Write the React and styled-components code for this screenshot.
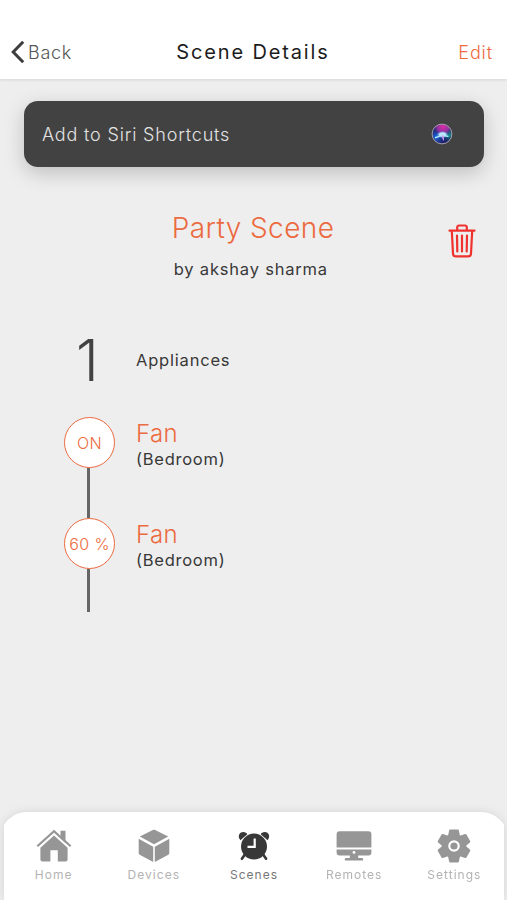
import styled, { createGlobalStyle } from "styled-components";

const COLORS = {
  accent: "#ec6a40",
  danger: "#f0322f",
  dark: "#424242",
  text: "#383838",
  background: "#eeeeee",
  muted: "#969696",
};

const GlobalStyle = createGlobalStyle`
  * {
    box-sizing: border-box;
  }
  body {
    margin: 0;
    background: ${COLORS.background};
    font-family: Inter, "Liberation Sans", sans-serif;
  }
`;

const steps = [
  { id: 1, value: "ON", name: "Fan", room: "(Bedroom)" },
  { id: 2, value: "60 %", name: "Fan", room: "(Bedroom)" },
];

const HomeIcon = () => (
  <svg width="36" height="34" viewBox="0 0 36 34" fill="currentColor">
    <path d="M24.5 1.7h5v12.2l-5-4.5z" />
    <path
      d="M1.3 17.2 18 2.2l16.7 15"
      fill="none"
      stroke="currentColor"
      strokeWidth="2.2"
    />
    <path d="M4.4 18.8 18 6.6l13.6 12.2v11.6a2 2 0 0 1-2 2h-7.8V21.2h-7.4v11.2H6.4a2 2 0 0 1-2-2z" />
  </svg>
);

const CubeIcon = () => (
  <svg width="36" height="34" viewBox="0 0 36 34" fill="currentColor">
    <path d="M3.8 7.6 17.4.8q.6-.3 1.2 0l13.6 6.8L18 15.3z" />
    <path d="M2.7 9.8 17.2 17.7v15.2L3.7 25.8q-1-.6-1-1.7z" />
    <path d="M33.3 9.8 18.8 17.7v15.2l13.5-7.1q1-.6 1-1.7z" />
  </svg>
);

const ClockIcon = () => (
  <svg width="36" height="34" viewBox="0 0 36 34" fill="currentColor">
    <path d="M4.4 11.2C1.3 8 3 3.1 7.3 3.1c2 0 3.5 1 4 2.2zM31.6 11.2c3.1-3.2 1.4-8.1-2.9-8.1-2 0-3.5 1-4 2.2z" />
    <circle cx="18" cy="17.6" r="13" />
    <path
      d="m8.5 26-2.6 3.8M27.5 26l2.6 3.8"
      stroke="currentColor"
      strokeWidth="2.6"
      strokeLinecap="round"
    />
    <path
      d="M18.7 9.4v8.4h-7.2"
      fill="none"
      stroke="#fff"
      strokeWidth="2.2"
    />
  </svg>
);

const MonitorIcon = () => (
  <svg width="36" height="34" viewBox="0 0 36 34" fill="currentColor">
    <path d="M3.6 2.2h28.8a3 3 0 0 1 3 3v13.4H.6V5.2a3 3 0 0 1 3-3z" />
    <path d="M.6 20.5h34.8v3a3 3 0 0 1-3 3H22.2V29h3.5a1.5 1.5 0 0 1 1.2 2.5H9.1A1.5 1.5 0 0 1 10.3 29h3.5v-2.5H3.6a3 3 0 0 1-3-3z" />
    <circle cx="18" cy="23.4" r="1.4" fill="#fff" />
  </svg>
);

const GearIcon = () => (
  <svg width="36" height="34" viewBox="0 0 36 34" fill="currentColor">
    <circle cx="18" cy="17" r="12.2" />
    {[0, 60, 120].map((angle) => (
      <path
        key={angle}
        transform={`rotate(${angle} 18 17)`}
        d="M14.3.5h7.4q1 0 1.2 1l1 5v21l-1 5q-.2 1-1.2 1h-7.4q-1 0-1.2-1l-1-5v-21l1-5q.2-1 1.2-1z"
      />
    ))}
    <circle cx="18" cy="17" r="4.7" fill="none" stroke="#fff" strokeWidth="2.2" />
  </svg>
);

const SiriIcon = () => (
  <svg width="22" height="22" viewBox="0 0 22 22">
    <defs>
      <radialGradient id="pink" cx=".55" cy=".12" r=".5">
        <stop offset="0" stopColor="#dc2ba6" />
        <stop offset=".6" stopColor="#a534a8" stopOpacity=".85" />
        <stop offset="1" stopColor="#55308f" stopOpacity="0" />
      </radialGradient>
      <radialGradient id="blue" cx=".2" cy=".65" r=".5">
        <stop offset="0" stopColor="#1c6ff0" />
        <stop offset="1" stopColor="#1b3692" stopOpacity="0" />
      </radialGradient>
      <radialGradient id="teal" cx=".88" cy=".55" r=".42">
        <stop offset="0" stopColor="#16958a" />
        <stop offset="1" stopColor="#124a72" stopOpacity="0" />
      </radialGradient>
      <radialGradient id="glow">
        <stop offset="0" stopColor="#fff" />
        <stop offset=".55" stopColor="#b5ecff" stopOpacity=".9" />
        <stop offset="1" stopColor="#6aaeff" stopOpacity="0" />
      </radialGradient>
    </defs>
    <circle cx="11" cy="11" r="9.8" fill="#1f2166" />
    <circle cx="11" cy="11" r="9.8" fill="url(#blue)" />
    <circle cx="11" cy="11" r="9.8" fill="url(#teal)" />
    <circle cx="11" cy="11" r="9.8" fill="url(#pink)" />
    <ellipse cx="11.5" cy="11.6" rx="6" ry="3.6" fill="url(#glow)" />
    <path
      d="M4 14.8Q8.5 14 11.5 11q3 2.5 6 2.5"
      fill="none"
      stroke="#b5ecff"
      strokeWidth="1.4"
    />
    <path d="M11.4 11.5q-1.2 3.5 1.4 6.5.8-4-1.4-6.5" fill="#cf92ee" />
    <circle cx="11" cy="11" r="9.9" fill="none" stroke="#b2a9b5" strokeWidth=".9" />
  </svg>
);

const TrashIcon = () => (
  <svg
    width="28"
    height="34"
    viewBox="0 0 28 34"
    fill="none"
    stroke="currentColor"
    strokeWidth="2.2"
    strokeLinecap="round"
    strokeLinejoin="round"
  >
    <path d="M1.5 6.7h25M9.2 6V3.2a1.7 1.7 0 0 1 1.7-1.7h6.2a1.7 1.7 0 0 1 1.7 1.7V6" />
    <path d="m3.8 7 1.2 22.5a3 3 0 0 0 3 2.9h12a3 3 0 0 0 3-2.9L24.2 7" />
    <path d="m9 11.5.3 16M14 11.5v16M19 11.5l-.3 16" />
  </svg>
);

const tabs = [
  { label: "Home", Icon: HomeIcon },
  { label: "Devices", Icon: CubeIcon },
  { label: "Scenes", Icon: ClockIcon, active: true },
  { label: "Remotes", Icon: MonitorIcon },
  { label: "Settings", Icon: GearIcon },
];

const App = () => {
  return (
    <Screen>
      <GlobalStyle />
      <Header>
        <BackButton>
          <svg width="14" height="24" viewBox="0 0 14 24" fill="none">
            <path d="M12.2 1.7 2.2 12l10 10.3" stroke="#3d3d3d" strokeWidth="3" />
          </svg>
          Back
        </BackButton>
        <Title>Scene Details</Title>
        <EditButton>Edit</EditButton>
      </Header>

      <Main>
        <SiriButton>
          Add to Siri Shortcuts
          <SiriIcon />
        </SiriButton>

        <SceneHeader>
          <SceneInfo>
            <SceneName>Party Scene</SceneName>
            <Author>by akshay sharma</Author>
          </SceneInfo>
          <DeleteButton aria-label="Delete">
            <TrashIcon />
          </DeleteButton>
        </SceneHeader>

        <Summary>
          <Count>1</Count>
          <CountLabel>Appliances</CountLabel>
        </Summary>

        <Timeline>
          {steps.map((step, index) => (
            <Step key={step.id}>
              <Track>
                <Badge $wide={step.value.length > 2}>{step.value}</Badge>
                <Line $last={index === steps.length - 1} />
              </Track>
              <StepInfo>
                <StepName>{step.name}</StepName>
                <Room>{step.room}</Room>
              </StepInfo>
            </Step>
          ))}
        </Timeline>
      </Main>

      <TabBarWrapper>
        <TabBarClip>
          <TabBar>
            {tabs.map(({ label, Icon, active }) => (
              <Tab key={label} $active={active}>
                <Icon />
                <TabLabel $active={active}>{label}</TabLabel>
              </Tab>
            ))}
          </TabBar>
        </TabBarClip>
      </TabBarWrapper>
    </Screen>
  );
};

const Screen = styled.div`
  display: flex;
  flex-direction: column;
  height: 900px;
  overflow: hidden;
  background: ${COLORS.background};
`;

const Button = styled.button`
  display: flex;
  align-items: center;
  padding: 0;
  border: 0;
  background: none;
  font-family: inherit;
  cursor: pointer;
`;

const Header = styled.header`
  display: grid;
  grid-template-columns: 1fr auto 1fr;
  align-items: center;
  height: 79px;
  padding: 25px 14px 0 11px;
  background: white;
  box-shadow: 0 1px 3px rgba(0, 0, 0, 0.1);
`;

const BackButton = styled(Button)`
  gap: 3px;
  color: #555555;
  font-size: 18px;
  font-weight: 300;
  letter-spacing: 0.7px;
`;

const Title = styled.h1`
  margin: 0;
  padding-left: 2px;
  color: #1c1c1c;
  font-size: 20px;
  font-weight: 400;
  line-height: 24px;
  letter-spacing: 1.85px;
`;

const EditButton = styled(Button)`
  justify-self: end;
  color: ${COLORS.accent};
  font-size: 18px;
  font-weight: 300;
  letter-spacing: 0.9px;
`;

const Main = styled.main`
  flex: 1;
  padding: 22px 23px 0 24px;
`;

const SiriButton = styled(Button)`
  justify-content: space-between;
  width: 100%;
  height: 66px;
  padding: 0 31px 0 18px;
  border-radius: 14px;
  background: ${COLORS.dark};
  box-shadow: 0 6px 20px rgba(0, 0, 0, 0.2);
  color: #e2e2e2;
  font-size: 18px;
  font-weight: 300;
  letter-spacing: 0.82px;
`;

const SceneHeader = styled.section`
  display: grid;
  grid-template-columns: 1fr auto 1fr;
  margin-top: 43px;
`;

const SceneInfo = styled.div`
  grid-column: 2;
  padding-right: 2px;
`;

const SceneName = styled.h2`
  margin: 0;
  color: ${COLORS.accent};
  font-size: 28px;
  font-weight: 300;
  line-height: 36px;
  letter-spacing: 0.4px;
`;

const Author = styled.p`
  margin: 12px 0 0 2px;
  color: ${COLORS.text};
  font-size: 16.5px;
  line-height: 22px;
  letter-spacing: 0.8px;
`;

const DeleteButton = styled(Button)`
  align-self: start;
  justify-self: end;
  margin: 14px 8px 0 0;
  color: ${COLORS.danger};
`;

const Summary = styled.section`
  display: flex;
  align-items: center;
  height: 60px;
  margin-top: 50px;
  padding-left: 40px;
`;

const Count = styled.span`
  width: 72px;
  padding-left: 12px;
  color: ${COLORS.dark};
  font-size: 58px;
  font-weight: 300;
`;

const CountLabel = styled.span`
  color: ${COLORS.text};
  font-size: 16.5px;
  letter-spacing: 0.8px;
`;

const Timeline = styled.section`
  margin-top: 27px;
  padding-left: 40px;
`;

const Step = styled.div`
  display: flex;
  gap: 21px;
`;

const Track = styled.div`
  display: flex;
  flex-direction: column;
  align-items: flex-start;
  width: 51px;
`;

const Badge = styled.div`
  display: flex;
  align-items: center;
  justify-content: center;
  width: 51px;
  height: 51px;
  border: 1.5px solid ${COLORS.accent};
  border-radius: 50%;
  background: white;
  color: ${COLORS.accent};
  font-size: 16px;
  font-weight: 300;
  letter-spacing: ${(props) => (props.$wide ? "0.4px" : "0.3px")};
`;

const Line = styled.div`
  width: 3px;
  height: ${(props) => (props.$last ? "43px" : "50px")};
  margin-left: 23px;
  background: #666666;
`;

const StepInfo = styled.div`
  padding-top: 3px;
`;

const StepName = styled.div`
  color: ${COLORS.accent};
  font-size: 24px;
  font-weight: 300;
  line-height: 27px;
  letter-spacing: 0.4px;
`;

const Room = styled.div`
  color: ${COLORS.text};
  font-size: 16.5px;
  line-height: 24px;
  letter-spacing: 0.75px;
`;

const TabBarWrapper = styled.div`
  height: 88px;
  margin: 0 3px 0 4px;
  filter: drop-shadow(0 0 5px rgba(0, 0, 0, 0.1));
`;

const TabBarClip = styled.div`
  height: 100%;
  overflow: hidden;
`;

const TabBar = styled.nav`
  display: flex;
  justify-content: center;
  height: 100%;
  margin: 0 -4px;
  padding-top: 17px;
  border-radius: 27px 27px 0 0;
  background: white;
`;

const Tab = styled.a`
  display: flex;
  flex-direction: column;
  align-items: center;
  width: 100.2px;
  color: ${(props) => (props.$active ? "#383838" : COLORS.muted)};
`;

const TabLabel = styled.span`
  margin-top: 4px;
  color: ${(props) => (props.$active ? "#777777" : "#b3b3b3")};
  font-size: 12px;
  line-height: 16px;
  letter-spacing: 1.02px;
`;

export default App;
